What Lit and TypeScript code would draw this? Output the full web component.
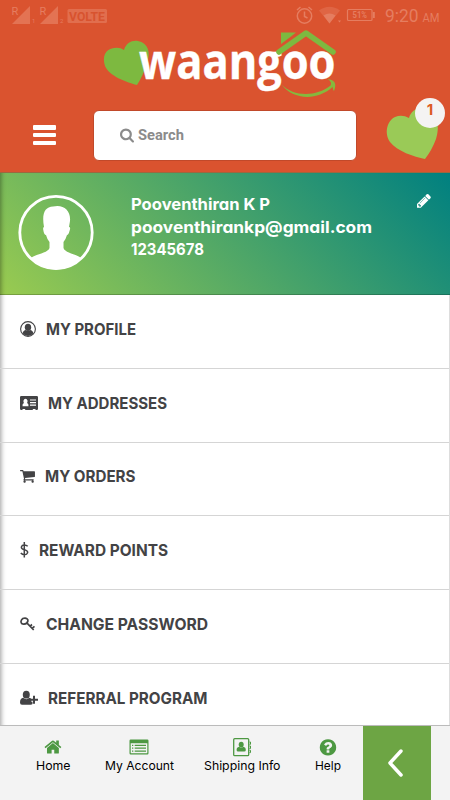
import { LitElement, html, css, svg } from "lit";
import { customElement } from "lit/decorators.js";

const label = (text: string, width: number, height: number, baseline: number) => html`
  <svg class="label" width=${width} height=${height}>
    <text x="0" y=${baseline} textLength=${width} lengthAdjust="spacingAndGlyphs">${text}</text>
  </svg>`;

const profileIcon = svg`
  <circle cx="8" cy="8" r="7.4" fill="none" stroke="currentColor" stroke-width="1.1"/>
  <ellipse cx="8" cy="6.3" rx="3.2" ry="3.6"/>
  <path d="M2.6 12.2C3.2 10.3 4.3 9.3 5.8 9.1Q8 11 10.2 9.1C11.7 9.3 12.8 10.3 13.4 12.2Q11.300 15 8 15T2.600 12.200Z"/>`;
const cardIcon = svg`
  <path fill-rule="evenodd" d="M1.200 1H16.800Q18 1 18 2.200V13.800Q18 15 16.800 15H15.500V14H12.800V15H5.200V14H2.500V15H1.200Q0 15 0 13.800V2.200Q0 1 1.200 1ZM2.500 11.200H8.500Q8.800 8.600 7 8Q7.800 7 7.500 5.500Q7 3.800 5.500 3.800T3.500 5.500Q3.200 7 4 8Q2.200 8.600 2.500 11.200ZM10 4.400V5.600H16V4.400ZM10 7V8.200H16V7ZM10 9.600V10.800H16V9.600Z"/>`;
const cartIcon = svg`
  <g transform="translate(-.6 -.2) scale(.009)"><path d="M704 1536q0 52-38 90t-90 38-90-38-38-90 38-90 90-38 90 38 38 90zm896 0q0 52-38 90t-90 38-90-38-38-90 38-90 90-38 90 38 38 90zm128-1088v512q0 24-16.500 42.500t-40.500 21.500l-1044 122q13 60 13 70 0 16-24 64h920q26 0 45 19t19 45-19 45-45 19h-1024q-26 0-45-19t-19-45q0-11 8-31.500t16-36 21.500-40 15.500-29.500l-177-823h-204q-26 0-45-19t-19-45 19-45 45-19h256q16 0 28.500 6.500t19.500 15.500 13 24.500 8 26 5.500 29.500 4.500 26h1201q26 0 45 19t19 45z"/></g>`;
const dollarIcon = svg`
  <path fill="none" stroke="currentColor" stroke-width="1.500" d="M4.300 0V15.500M7.700 4.300Q6.300 2.900 4.400 2.900C1 2.900.5 6.300 3 7.200L5.600 8.100C8.900 9.400 7.900 12.700 4.400 12.700Q2.300 12.700.8 11"/>`;
const keyIcon = svg`
  <g fill="none" stroke="currentColor" stroke-width="1.700" transform="translate(0 .6)"><path d="M1.200 6.200C.3 4 2.200 1.800 4.400 1.600C6.500 1.300 8.300 2.800 7.900 4.400C7.500 6.300 5.600 7.500 4 7.600C2.600 7.700 1.500 7.200 1.200 6.200Z"/>
  <path d="M6.800 6.300L13.700 13.400M9.900 9.800L12 7.900M12 11.800L14.500 9.700"/></g>`;
const userPlusIcon = svg`
  <ellipse cx="6.300" cy="4.700" rx="3.500" ry="3.900"/>
  <path d="M3.200 7.800Q6.300 10.600 9.400 7.800Q10.700 8 11.300 8.900V11.800H12.500V14Q12 14.700 10.500 14.700H2Q0 14.700 0 12.500C.1 9.800 1 8 3.200 7.800Z"/>
  <path d="M14 5.700V13.700M10 9.700H18" fill="none" stroke="currentColor" stroke-width="2"/>`;

const MENU = [
  { text: "MY PROFILE", width: 90, icon: profileIcon, iw: 16, gap: 10 },
  { text: "MY ADDRESSES", width: 119, icon: cardIcon, iw: 18, gap: 10 },
  { text: "MY ORDERS", width: 90.5, icon: cartIcon, iw: 15, gap: 10 },
  { text: "REWARD POINTS", width: 129, icon: dollarIcon, iw: 9, gap: 10 },
  { text: "CHANGE PASSWORD", width: 162, icon: keyIcon, iw: 15, gap: 10.5 },
  { text: "REFERRAL PROGRAM", width: 159.5, icon: userPlusIcon, iw: 18, gap: 9.5 },
];

const TABS = [
  {
    text: "Home", width: 34.500,
    icon: svg`<g transform="translate(.7 -.2) scale(.0103)"><path d="M1472 992v480q0 26-19 45t-45 19h-384v-384h-256v384h-384q-26 0-45-19t-19-45v-480q0-1 .5-3t.5-3l575-474 575 474q1 2 1 6zm223-69l-62 74q-8 9-21 11h-3q-13 0-21-7l-692-577-692 577q-12 8-24 7-13-2-21-11l-62-74q-8-10-7-23.500t11-21.500l719-599q32-26 76-26t76 26l244 204v-195q0-14 9-23t23-9h192q14 0 23 9t9 23v408l219 182q10 8 11 21.500t-7 23.500z"/></g>`,
  },
  {
    text: "My Account", width: 69,
    icon: svg`<path fill-rule="evenodd" d="M1.700 1.500H18.300Q19.500 1.500 19.500 2.700V15.300Q19.500 16.500 18.300 16.500H1.700Q.5 16.500 .5 15.300V2.700Q.5 1.500 1.700 1.500ZM1.700 5.300V14.700Q1.700 15.300 2.300 15.300H17.700Q18.300 15.300 18.300 14.700V5.300Z"/>
    <path d="M3 7.300H4.300M5.700 7.300H17M3 10.200H4.300M5.700 10.200H17M3 13.100H4.300M5.700 13.100H17" fill="none" stroke="currentColor" stroke-width="1.300"/>`,
  },
  {
    text: "Shipping Info", width: 76.500,
    icon: svg`<rect x="1.700" y=".7" width="15" height="17" rx="1" fill="none" stroke="currentColor" stroke-width="1.300"/>
    <ellipse cx="9.200" cy="6.600" rx="2.500" ry="2.900"/><path d="M7.200 8.700Q9.200 10.500 11.200 8.700C13 9 13.800 10.200 13.800 12Q13.800 13.600 12.300 13.600H6.100Q4.600 13.600 4.600 12C4.600 10.200 5.400 9 7.200 8.700Z"/>
    <path d="M17.500 4H18.500V6.300H17.500M17.500 8H18.500V10.500H17.500M17.500 12.300H18.500V14.600H17.500" fill="none" stroke="currentColor" stroke-width="1"/>`,
  },
  {
    text: "Help", width: 26,
    icon: svg`<g transform="translate(.4 -.2) scale(.0107)"><path d="M1024 1376v-192q0-14-9-23t-23-9h-192q-14 0-23 9t-9 23v192q0 14 9 23t23 9h192q14 0 23-9t9-23zm256-672q0-88-55.500-163t-138.500-116-170-41q-243 0-371 213-15 24 8 42l132 100q7 6 19 6 16 0 25-12 53-68 86-92 34-24 86-24 48 0 85.500 26t37.500 59q0 38-20 61t-68 45q-63 28-115.500 86.500t-52.500 125.500v36q0 14 9 23t23 9h192q14 0 23-9t9-23q0-19 21.500-49.500t54.500-49.500q32-18 49-28.500t46-35 44.500-48 28-60.500 12.500-81zm384 192q0 209-103 385.500t-279.500 279.500-385.500 103-385.500-103-279.500-279.500-103-385.500 103-385.500 279.500-279.500 385.500-103 385.500 103 279.500 279.500 103 385.500z"/></g>`,
  },
];

@customElement("app-root")
export class AppRoot extends LitElement {
  static styles = css`
    :host { display: flex; flex-direction: column; width: 450px; height: 800px; overflow: hidden; background: #fff; font-family: Inter, "Open Sans", sans-serif; }
    * { box-sizing: border-box; }
    svg { display: block; flex: none; overflow: visible; }
    .label text { fill: currentColor; font-feature-settings: "cv11"; }
    header { flex: none; height: 173px; background: #da532f; border-bottom: 1px solid #9b6840; display: flex; flex-direction: column; }
    .status { height: 28px; color: #e57d60; display: flex; justify-content: space-between; }
    .status text { fill: currentColor; font-family: Roboto, sans-serif; }
    .status .volte { fill: #d8532f; }
    .logo { height: 72px; padding-left: 100px; }
    .logo text { font: 700 48px "Open Sans", sans-serif; fill: #fff; stroke: #fff; stroke-width: .4px; }
    .bar { height: 72px; display: flex; align-items: center; padding: 0 7px 2px 33px; }
    .burger { width: 23px; height: 20px; display: flex; flex-direction: column; justify-content: space-between; margin-right: 37px; }
    .burger i { height: 4.500px; border-radius: 1px; background: #fff; }
    .search { width: 264px; height: 51px; margin-top: 1px; border-radius: 6px; background: #fff; border: 1px solid #c1492a; display: flex; align-items: center; padding: 0 0 1px 26px; gap: 4px; color: #8b8b8b; }
    .search .label { font: 700 14.500px Roboto, sans-serif; }
    .fav { position: relative; margin-left: 30px; width: 52px; height: 54px; }
    .fav svg { margin-top: 1px; }
    .badge { position: absolute; left: 28px; top: -10px; width: 30px; height: 30px; border-radius: 50%; background: #f4f3f3; color: #dc5b25; font: 700 15px/23px Inter, sans-serif; text-align: center; }
    .profile { flex: none; height: 122px; background: linear-gradient(45deg, #9acb50, #008080); box-shadow: inset 6px 0 5px -5px #0006, inset 0 -1px #0003; display: flex; color: #fff; padding: 21px 18px 0; }
    .pencil { margin-top: 1px; }
    .who { margin-left: 37px; width: 285.500px; }
    .who .label { font: 700 16.600px Inter, sans-serif; }
    nav { flex: 1; overflow: hidden; box-shadow: inset 6px 0 5px -5px #0006; color: #434345; border-right: 1px solid #ddd; }
    .item { height: 73.750px; display: flex; align-items: center; padding: 0 0 5px 20px; border-bottom: 1.500px solid #d5d5d5; }
    .item .label { font: 700 16.400px Inter, sans-serif; }
    footer { flex: none; height: 75px; background: #f3f3f3; border-top: 1px solid #bbb; display: flex; padding-left: 36px; }
    .tabs { width: 326.500px; display: grid; grid-template-columns: 68.500px 99.500px 111px 47.500px; justify-items: start; padding-top: 12px; }
    .tab { display: flex; flex-direction: column; align-items: center; color: #000; }
    .tab .glyph { color: #4d9842; }
    .tab .label { font: 400 12px Inter, sans-serif; margin-top: -1px; }
    .back { width: 68.500px; height: 74px; background: #6da544; display: flex; align-items: center; justify-content: center; padding-right: 4px; }
  `;

  render() {
    return html`
      <header>
        <div class="status">
          <svg width="110" height="28">
            <g fill="currentColor">
              <path d="M12 24H30V6Z" opacity=".75"/><path d="M40 24H58V6Z" opacity=".75"/>
              <rect x="67.500" y="9" width="39.500" height="14" rx="1.500" opacity=".65"/>
              <text x="11.500" y="15" font-size="11">R</text><text x="39.500" y="15" font-size="11">R</text>
              <text x="32" y="23" font-size="6">1</text><text x="60" y="23" font-size="6">2</text>
            </g>
            <text class="volte" x="69" y="21" font-size="13" font-weight="700" textLength="36" lengthAdjust="spacingAndGlyphs">VOLTE</text>
          </svg>
          <svg width="154" height="28" fill="none" stroke="currentColor">
            <circle cx="8.500" cy="16" r="7.200" stroke-width="1.500"/>
            <path d="M8.500 11.500V16.500L11.500 18M1 10L4.500 7M16 10L12.500 7" stroke-width="1.500"/>
            <path d="M23 10.500Q33.500 3 44 10.500L33.500 23.500Z" fill="currentColor" stroke="none" opacity=".45"/>
            <path d="M27.500 15.500Q33.500 11.500 39.500 15.500L33.500 23.500Z" fill="currentColor" stroke="none"/>
            <path d="M42 20.500H45L43.500 22.500Z" fill="currentColor" stroke="none"/>
            <rect x="51.500" y="9.500" width="24.500" height="11" rx="1" stroke-width="1.200"/>
            <path d="M77.800 12V18" stroke-width="2"/>
            <g stroke="none"><text x="56.500" y="18.200" font-size="8.500" font-weight="700" textLength="14.500" lengthAdjust="spacingAndGlyphs">51%</text>
            <text x="89" y="22" font-size="18.500" textLength="33.500" lengthAdjust="spacingAndGlyphs">9:20</text>
            <text x="126.500" y="22" font-size="12" textLength="17" lengthAdjust="spacingAndGlyphs">AM</text></g>
          </svg>
        </div>
        <div class="logo">
          <svg width="240" height="72" viewBox="100 28 240 72">
            <path d="M137 85C126 82 109 76 105 66C102 57 105 49 114 48Q120 47 124 50C126 43 132 40 138 41C148 43 151 52 147 63Q143 76 137 85Z" fill="#7db940"/>
            <path d="M281 45V32.500H296L291 36.500L281 44Z" fill="#7db940"/>
            <text x="139" y="78.500" textLength="196.500" lengthAdjust="spacingAndGlyphs">waangoo</text>
            <path d="M279 52L306 33L333 52" fill="none" stroke="#7db940" stroke-width="5.600" stroke-linecap="round" stroke-linejoin="round"/>
            <path d="M281.500 84.500C294 97 316 97 330.500 85.500Q332.500 82 327.500 79Q338.500 80 334 91Q333 90 332.500 87C316 102 292 99 281.500 84.500Z" fill="#86b83d"/>
          </svg>
        </div>
        <div class="bar">
          <div class="burger"><i></i><i></i><i></i></div>
          <div class="search">
            <svg width="14" height="15" viewBox="64 128 1664 1664" fill="currentColor"><path d="M1216 832q0-185-131.500-316.500t-316.500-131.500-316.500 131.500-131.500 316.500 131.500 316.500 316.500 131.500 316.500-131.500 131.500-316.500zm512 832q0 52-38 90t-90 38q-54 0-90-38l-343-342q-179 124-399 124-143 0-273.500-55.500t-225-150-150-225-55.500-273.500 55.500-273.500 150-225 225-150 273.500-55.500 273.500 55.500 225 150 150 225 55.500 273.500q0 220-124 399l343 343q37 37 37 90z"/></svg>
            ${label("Search", 46, 18, 14)}
          </div>
          <div class="fav">
            <svg width="52" height="54"><path transform="translate(0 6)" d="M38 44C27 42 10 36 3 27C-3 18 0 6 8 2Q15-1 22 3C24-4 31-9 39-6C51-2 53 12 49 24Q45 35 38 44Z" fill="#9aca57"/></svg>
            <span class="badge">1</span>
          </div>
        </div>
      </header>
      <section class="profile">
        <svg width="76" height="77" fill="#fff">
          <circle cx="38" cy="38.500" r="36.200" fill="none" stroke="#fff" stroke-width="2.800"/>
          <path d="M26 33C23.500 19 27 13 35 12.500C45 10 53 16 52 27L51 33Q53 33 51.500 37Q50.500 41 49 41Q47.500 46 45.500 48V54C47 59 58 60 63 64Q53 75.500 38 75.500T13 64C18 60 30 59 31.500 54V48Q29 45 28 41Q26 41 25.300 36Q24.700 33.500 26 33Z"/>
        </svg>
        <div class="who">
          ${label("Pooventhiran K P", 139, 22.5, 16)}
          ${label("pooventhirankp@gmail.com", 241, 22.5, 16)}
          ${label("12345678", 73, 22.5, 16)}
        </div>
        <svg class="pencil" width="14" height="14" viewBox="128 256 1536 1536" fill="#fff"><path d="M491 1536l91-91-235-235-91 91v107h128v128h107zm523-928q0-22-22-22-10 0-17 7l-542 542q-7 7-7 17 0 22 22 22 10 0 17-7l542-542q7-7 7-17zm-54-192l416 416-832 832h-416v-416zm683 96q0 53-37 90l-166 166-416-416 166-165q36-38 90-38 53 0 91 38l235 234q37 39 37 91z"/></svg>
      </section>
      <nav>
        ${MENU.map(
          (m) => html`<div class="item">
            <svg width=${m.iw} height="16" fill="currentColor">${m.icon}</svg>
            <svg width=${m.gap} height="1"></svg>
            ${label(m.text, m.width, 20, 16)}
          </div>`
        )}
      </nav>
      <footer>
        <div class="tabs">
          ${TABS.map(
            (t) => html`<div class="tab">
              <svg class="glyph" width="20" height="19" fill="currentColor">${t.icon}</svg>
              ${label(t.text, t.width, 20, 14)}
            </div>`
          )}
        </div>
        <div class="back">
          <svg width="16" height="30"><path d="M14 3L3 15L14 27" fill="none" stroke="#fff" stroke-width="3.500" stroke-linecap="round" stroke-linejoin="round"/></svg>
        </div>
      </footer>
    `;
  }
}
